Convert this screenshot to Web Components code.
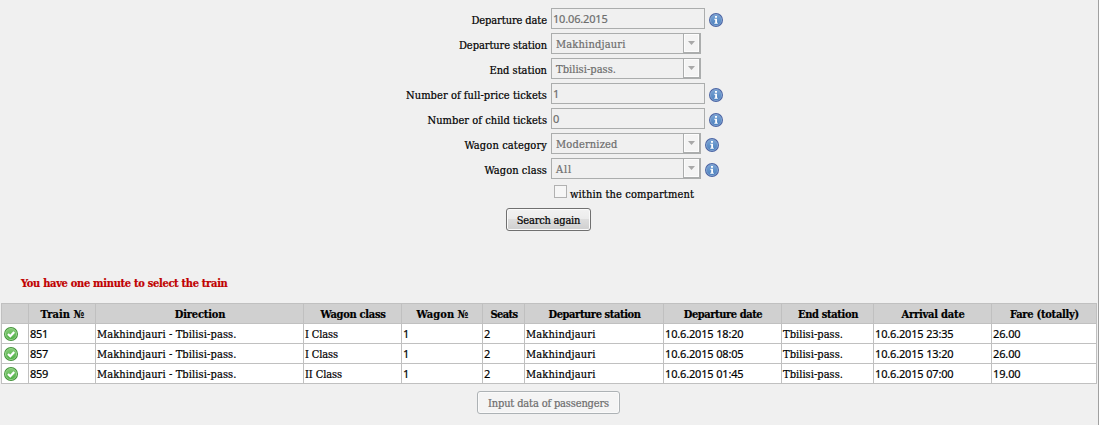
<!DOCTYPE html>
<html lang="en">
<head>
<meta charset="utf-8">
<title>Tickets</title>
<style>
  body {
    margin: 0;
    background: #f0f0f0;
    color: #000;
    font: 11px/14px "DejaVu Serif Condensed", "DejaVu Serif", serif;
    font-stretch: condensed;
    -webkit-text-stroke: .2px;
  }
</style>
</head>
<body>
<ticket-page></ticket-page>

<script>
// single line of text, tracked so that it takes the given width
class FitText extends HTMLElement {
  constructor() {
    super();
    this.attachShadow({ mode: 'open' });
  }

  connectedCallback() {
    this.shadowRoot.innerHTML = `
      <style>
        :host { display: inline-block; padding-top: 1px; white-space: nowrap; vertical-align: top; }
        :host([num]) { padding-top: 0; font-family: "Noto Sans", sans-serif; font-stretch: normal; }
        span { display: block; width: max-content; }
      </style>
      <span><slot></slot></span>
    `;
    const width = Number(this.getAttribute('w'));
    const span = this.shadowRoot.querySelector('span');
    const count = this.textContent.length;
    if (width && count > 1) {
      const natural = span.getBoundingClientRect().width;
      span.style.letterSpacing = (width - natural) / count + 'px';
    }
  }
}

class InfoIcon extends HTMLElement {
  constructor() {
    super();
    this.attachShadow({ mode: 'open' });
  }

  connectedCallback() {
    this.shadowRoot.innerHTML = `
      <style>
        :host { display: block; width: 14px; height: 14px; }
        svg { display: block; }
      </style>
      <svg width="14" height="14" viewBox="0 0 14 14">
        <defs>
          <linearGradient id="g" x1="0" y1="0" x2="0" y2="1">
            <stop offset="0" stop-color="#7ba6d6"/>
            <stop offset="1" stop-color="#4a7fbd"/>
          </linearGradient>
        </defs>
        <circle cx="7" cy="7" r="7" fill="#4a64a4"/>
        <circle cx="7" cy="7" r="5.6" fill="url(#g)" stroke="#8fb0d8" stroke-width=".7"/>
        <path d="M6 3h2v1.7H6zM5.3 5.8H8v4h.8v.9H5.3v-.9h.9V6.7h-.9z" fill="#fff"/>
      </svg>
    `;
  }
}

class CheckIcon extends HTMLElement {
  constructor() {
    super();
    this.attachShadow({ mode: 'open' });
  }

  connectedCallback() {
    this.shadowRoot.innerHTML = `
      <style>
        :host { display: block; width: 14px; height: 14px; }
        svg { display: block; }
      </style>
      <svg width="14" height="14" viewBox="0 0 14 14">
        <defs>
          <linearGradient id="g" x1="0" y1="0" x2="0" y2="1">
            <stop offset="0" stop-color="#86cd78"/>
            <stop offset="1" stop-color="#4fae45"/>
          </linearGradient>
        </defs>
        <circle cx="7" cy="7" r="7" fill="#43943a"/>
        <circle cx="7" cy="7" r="5.6" fill="url(#g)" stroke="#a5dc98" stroke-width=".8"/>
        <path d="M4 7l2.3 2.2L10.2 4.9" fill="none" stroke="#fff" stroke-width="2.2"/>
      </svg>
    `;
  }
}

class FormRow extends HTMLElement {
  constructor() {
    super();
    this.attachShadow({ mode: 'open' });
  }

  connectedCallback() {
    this.shadowRoot.innerHTML = `
      <style>
        :host {
          display: grid;
          grid-template-columns: 547px auto 14px;
          column-gap: 4px;
          height: 25px;
          justify-content: start;
        }
        .label { text-align: right; padding-top: 5px; }
        info-icon { margin-top: 5px; }
      </style>
      <div class="label"><slot name="label"></slot></div>
      <slot></slot>
      ${this.hasAttribute('info') ? '<info-icon></info-icon>' : ''}
    `;
  }
}

class TextField extends HTMLElement {
  constructor() {
    super();
    this.attachShadow({ mode: 'open' });
  }

  connectedCallback() {
    this.shadowRoot.innerHTML = `
      <style>
        :host {
          display: block;
          box-sizing: border-box;
          width: 154px;
          height: 21px;
          padding: 3px 1px;
          border: 1px solid #abadad;
          color: #6d6d6d;
        }
      </style>
      <slot></slot>
    `;
  }
}

class SelectField extends HTMLElement {
  constructor() {
    super();
    this.attachShadow({ mode: 'open' });
  }

  connectedCallback() {
    this.shadowRoot.innerHTML = `
      <style>
        :host {
          display: flex;
          justify-content: space-between;
          box-sizing: border-box;
          width: 150px;
          height: 21px;
          border: 1px solid #abadad;
          color: #6d6d6d;
        }
        .value { padding: 3px 0 0 4px; }
        .arrow {
          display: flex;
          align-items: center;
          justify-content: center;
          box-sizing: border-box;
          width: 17px;
          border: 1px solid #abadad;
          border-width: 0 1px 1px 1px;
          background: #f4f4f4;
          box-shadow: inset 0 0 0 1px #fcfcfc;
        }
      </style>
      <div class="value"><slot></slot></div>
      <div class="arrow">
        <svg width="7" height="4" viewBox="0 0 7 4"><path d="M0 0h7L3.5 4z" fill="#a8a8a8"/></svg>
      </div>
    `;
  }
}

class PushButton extends HTMLElement {
  constructor() {
    super();
    this.attachShadow({ mode: 'open' });
  }

  connectedCallback() {
    this.shadowRoot.innerHTML = `
      <style>
        :host { display: block; }
        button {
          display: block;
          box-sizing: border-box;
          width: 100%;
          height: 23px;
          margin: 0;
          padding: 1px 0 0 0;
          border: 1px solid #707070;
          border-radius: 3px;
          background: linear-gradient(#f2f2f2, #ebebeb 50%, #dddddd 50%, #cfcfcf);
          box-shadow: inset 0 0 0 1px #fafafa;
          color: #000;
          font: inherit;
        }
        :host([off]) button {
          border-color: #adb2b5;
          background: #f4f4f4;
          color: #6d6d6d;
        }
      </style>
      <button><slot></slot></button>
    `;
  }
}

class TrainTable extends HTMLElement {
  constructor() {
    super();
    this.attachShadow({ mode: 'open' });
  }

  connectedCallback() {
    const heads = [
      ['', 0], ['Train №', 44], ['Direction', 50.5], ['Wagon class', 65], ['Wagon №', 52],
      ['Seats', 27], ['Departure station', 92], ['Departure date', 78.5],
      ['End station', 60], ['Arrival date', 63], ['Fare (totally)', 69]
    ];
    const rows = [
      ['851', 'I Class', '18:20', '23:35', '26.00'],
      ['857', 'I Class', '08:05', '13:20', '26.00'],
      ['859', 'II Class', '01:45', '07:00', '19.00']
    ];
    const num = (text, w) => `<div><fit-text num w="${w}">${text}</fit-text></div>`;
    const txt = (text, w) => `<div><fit-text w="${w}">${text}</fit-text></div>`;
    this.shadowRoot.innerHTML = `
      <style>
        :host {
          display: grid;
          grid-template-columns: 27px 67px 208px 98px 81px 42px 139px 118px 92px 118px 105px;
          grid-auto-rows: 20px;
          width: 1095px;
          border: 1px solid #c0c0c0;
          border-width: 0 1px 1px 0;
        }
        div {
          border: 1px solid #c0c0c0;
          border-width: 1px 0 0 1px;
          background: #fff;
          padding: 3px 0 0 1px;
        }
        .head {
          background: #d0d0d0;
          font-weight: bold;
          text-align: center;
        }
        check-icon { margin-left: 1px; }
      </style>
      ${heads.map(([text, w]) => `<div class="head">${text && `<fit-text w="${w}">${text}</fit-text>`}</div>`).join('')}
      ${rows.map(([train, cls, dep, arr, fare]) => `
        <div><check-icon></check-icon></div>
        ${num(train, 18)}
        ${txt('Makhindjauri - Tbilisi-pass.', 139.5)}
        ${txt(cls, cls === 'I Class' ? 33 : 37)}
        ${num('1', 0)}
        ${num('2', 0)}
        ${txt('Makhindjauri', 69.5)}
        ${num('10.6.2015 ' + dep, 78.5)}
        ${txt('Tbilisi-pass.', 60)}
        ${num('10.6.2015 ' + arr, 78.5)}
        ${num(fare, 27.5)}
      `).join('')}
    `;
  }
}

class TicketPage extends HTMLElement {
  constructor() {
    super();
    this.attachShadow({ mode: 'open' });
  }

  connectedCallback() {
    this.shadowRoot.innerHTML = `
      <style>
        :host {
          display: block;
          box-sizing: border-box;
          width: 1099px;
          height: 425px;
          padding-top: 8px;
          border-right: 1px solid #a0a0a0;
        }
        .compartment {
          display: flex;
          gap: 3px;
          height: 25px;
          padding-left: 554px;
        }
        .box {
          box-sizing: border-box;
          width: 13px;
          height: 13px;
          margin-top: 2px;
          border: 1px solid #b1b1b1;
          background: #f6f6f6;
        }
        .compartment fit-text { margin-top: 4px; }
        .search { width: 85px; margin-left: 506px; }
        .warning {
          margin: 45px 0 12px 21px;
          color: #c00000;
          font-weight: bold;
        }
        train-table { margin-left: 1px; }
        .input { width: 143px; margin: 7px 0 0 477px; }
      </style>
      <form-row info>
        <fit-text slot="label" w="75.5">Departure date</fit-text>
        <text-field><fit-text num w="54.5">10.06.2015</fit-text></text-field>
      </form-row>
      <form-row>
        <fit-text slot="label" w="88">Departure station</fit-text>
        <select-field><fit-text w="69.5">Makhindjauri</fit-text></select-field>
      </form-row>
      <form-row>
        <fit-text slot="label" w="57.5">End station</fit-text>
        <select-field><fit-text w="60">Tbilisi-pass.</fit-text></select-field>
      </form-row>
      <form-row info>
        <fit-text slot="label" w="141">Number of full-price tickets</fit-text>
        <text-field><fit-text num>1</fit-text></text-field>
      </form-row>
      <form-row info>
        <fit-text slot="label" w="119.5">Number of child tickets</fit-text>
        <text-field><fit-text num>0</fit-text></text-field>
      </form-row>
      <form-row info>
        <fit-text slot="label" w="82.5">Wagon category</fit-text>
        <select-field><fit-text w="61.5">Modernized</fit-text></select-field>
      </form-row>
      <form-row info>
        <fit-text slot="label" w="62.5">Wagon class</fit-text>
        <select-field><fit-text w="16">All</fit-text></select-field>
      </form-row>
      <div class="compartment">
        <div class="box"></div>
        <fit-text w="124">within the compartment</fit-text>
      </div>
      <push-button class="search"><fit-text w="63.5">Search again</fit-text></push-button>
      <div class="warning"><fit-text w="206.5">You have one minute to select the train</fit-text></div>
      <train-table></train-table>
      <push-button class="input" off><fit-text w="121">Input data of passengers</fit-text></push-button>
    `;
  }
}

customElements.define('fit-text', FitText);
customElements.define('info-icon', InfoIcon);
customElements.define('check-icon', CheckIcon);
customElements.define('form-row', FormRow);
customElements.define('text-field', TextField);
customElements.define('select-field', SelectField);
customElements.define('push-button', PushButton);
customElements.define('train-table', TrainTable);
customElements.define('ticket-page', TicketPage);
</script>
</body>
</html>
